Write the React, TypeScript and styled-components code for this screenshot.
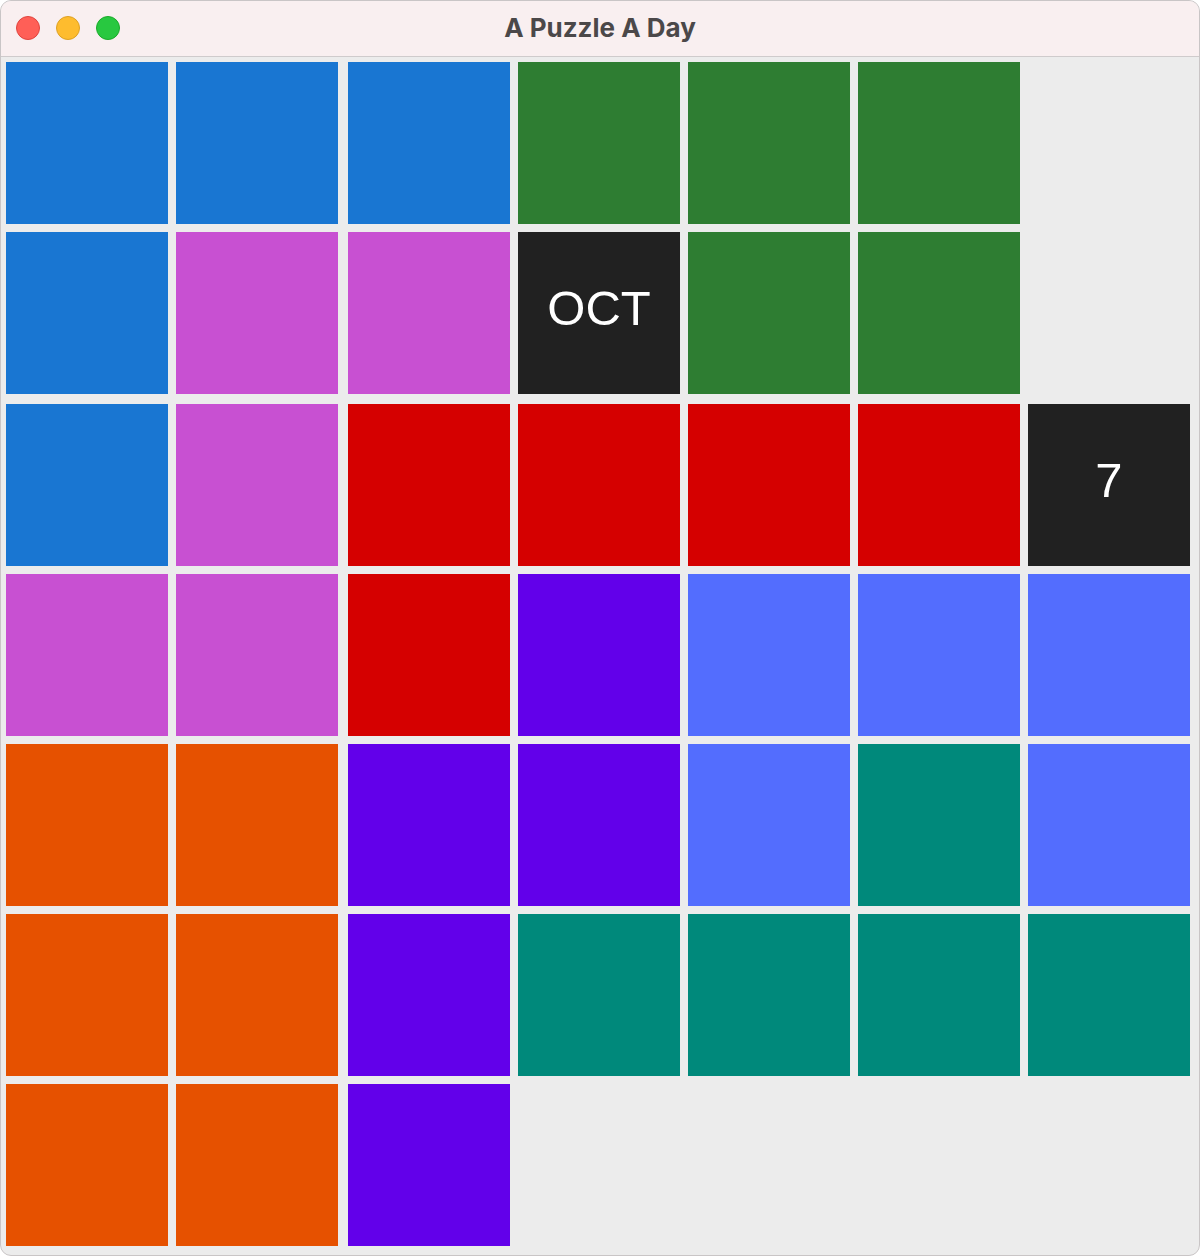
import React from 'react';
import styled, { createGlobalStyle } from 'styled-components';

const GlobalStyle = createGlobalStyle`
  html, body {
    margin: 0;
    padding: 0;
    background: #ffffff;
  }
`;

const Window = styled.div`
  width: 1200px;
  height: 1256px;
  box-sizing: border-box;
  border: 1px solid #c9c5c6;
  border-radius: 11px;
  overflow: hidden;
  background: #ececec;
  display: flex;
  flex-direction: column;
`;

const TitleBar = styled.div`
  position: relative;
  height: 55px;
  flex-shrink: 0;
  background: #f9eff0;
  border-bottom: 1px solid #cfcbcc;
  display: flex;
  align-items: center;
  justify-content: center;
`;

const Lights = styled.div`
  position: absolute;
  left: 15px;
  top: 15px;
  display: flex;
  gap: 16px;
`;

const Light = styled.span<{ $fill: string; $ring: string }>`
  width: 24px;
  height: 24px;
  border-radius: 50%;
  box-sizing: border-box;
  background: ${p => p.$fill};
  border: 1px solid ${p => p.$ring};
`;

const Title = styled.div`
  font-family: Inter, "Open Sans", "Liberation Sans", sans-serif;
  font-weight: 700;
  font-size: 26px;
  line-height: 1;
  margin-top: -1px;
  color: #4b4849;
`;

// the third column and row sit 2px further out than the rest
const Board = styled.div`
  padding: 5px 10px 10px 5px;
  display: grid;
  grid-template-columns: 162px 164px repeat(5, 162px);
  grid-template-rows: 162px 164px repeat(5, 162px);
  gap: 8px;
  justify-items: start;
  align-items: start;
`;

const Cell = styled.div<{ $color: string }>`
  width: 162px;
  height: 162px;
  box-sizing: border-box;
  padding-bottom: 10px;
  background: ${p => p.$color};
  display: flex;
  align-items: center;
  justify-content: center;
  font-family: "Liberation Sans", Arial, sans-serif;
  font-size: 49px;
  color: #ffffff;
`;

const C: Record<string, string> = {
  B: '#1976d2',
  G: '#2e7d32',
  M: '#c850d2',
  K: '#212121',
  R: '#d50000',
  V: '#6200ea',
  P: '#536dfe',
  O: '#e65100',
  T: '#00897b',
  _: 'transparent',
};

const layout = [
  'BBBGGG_',
  'BMMKGG_',
  'BMRRRRK',
  'MMRVPPP',
  'OOVVPTP',
  'OOVTTTT',
  'OOV____',
];

const labels: Record<string, string> = {
  '1-3': 'OCT',
  '2-6': '7',
};

export default function App() {
  return (
    <>
      <GlobalStyle />
      <Window>
        <TitleBar>
          <Lights>
            <Light $fill="#ff5f57" $ring="#e0443e" />
            <Light $fill="#febc2e" $ring="#dea123" />
            <Light $fill="#28c840" $ring="#1aab29" />
          </Lights>
          <Title>A Puzzle A Day</Title>
        </TitleBar>
        <Board>
          {layout.map((row, r) =>
            row.split('').map((k, c) => (
              <Cell key={`${r}-${c}`} $color={C[k]}>
                {labels[`${r}-${c}`]}
              </Cell>
            ))
          )}
        </Board>
      </Window>
    </>
  );
}
